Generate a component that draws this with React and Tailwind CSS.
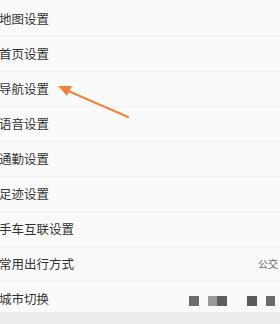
import React from 'react';

const items = ['地图设置', '首页设置', '导航设置', '语音设置', '通勤设置', '足迹设置', '手车互联设置', '常用出行方式'];

function Mosaic() {
  return (
    <div className="flex items-center mt-[3px]">
      <span className="w-[10px] h-[10px] bg-[#6b6b6b]" />
      <span className="ml-[9px] w-[9px] h-[10px] bg-[#9a9a9a]" />
      <span className="w-[10px] h-[10px] bg-[#5e5e5e]" />
      <span className="ml-[20px] w-[10px] h-[10px] bg-[#5a5a5a]" />
      <span className="ml-[9px] w-[9px] h-[10px] bg-[#6a6a6a]" />
      <span className="w-[5px]" />
    </div>
  );
}

export default function App() {
  return (
    <div
      className="relative w-[280px] h-[324px] overflow-hidden bg-[#fafafa] text-[#333]"
      style={{ fontFamily: '"Noto Sans CJK SC", "Noto Sans", sans-serif' }}
    >
      <div className="pt-[2px]">
        {items.map((label, i) => (
          <div key={i} className="h-[35px] flex items-center justify-between border-b border-[#f2f2f2] pr-[2px]">
            <span className="text-[12.5px] leading-none -ml-[1px]">{label}</span>
            {label === '常用出行方式' && <span className="text-[10px] text-[#666] leading-none">公交</span>}
          </div>
        ))}
        <div className="h-[36px] flex items-start justify-between pt-[11px]">
          <span className="text-[12.5px] leading-none -ml-[1px]">城市切换</span>
          <Mosaic />
        </div>
      </div>
      <div className="absolute left-0 right-0 bottom-0 h-[12px] bg-[#ececec]" />
      <svg className="absolute left-0 top-0" width="280" height="324" viewBox="0 0 280 324">
        <line x1="128" y1="117" x2="66" y2="90" stroke="#f0843f" strokeWidth="2.2" strokeLinecap="round" />
        <polygon points="58,86 72,86 67,96" fill="#f0843f" />
      </svg>
    </div>
  );
}
